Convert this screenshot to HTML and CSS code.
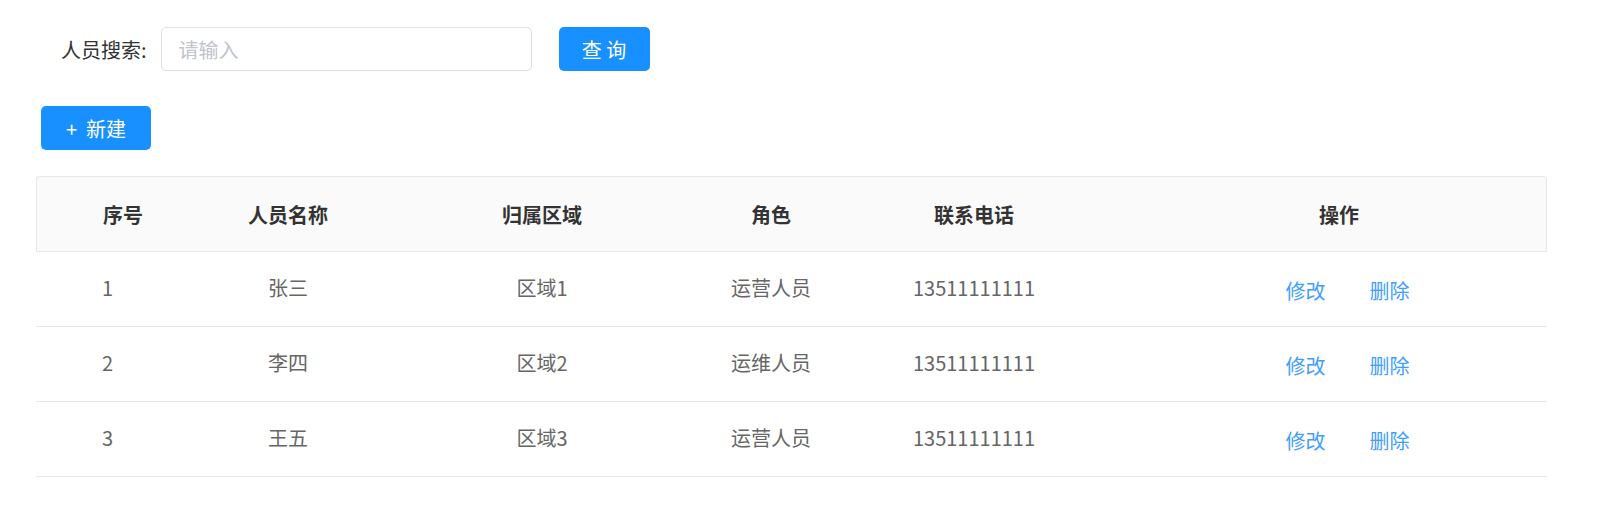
FILE: index.html
```html
<!DOCTYPE html>
<html lang="zh-CN">
<head>
    <meta charset="UTF-8" />
    <title>人员管理</title>
    <link rel="stylesheet" href="styles.css">
</head>
<body>
    <div class="search-bar">
        <span class="search-label">人员搜索:</span>
        <input type="text" class="search-input" placeholder="请输入" />
        <button class="btn btn-query">查 询</button>
    </div>

    <div class="toolbar">
        <button class="btn btn-new">+&nbsp; 新建</button>
    </div>

    <table class="user-table">
        <colgroup>
            <col class="w-index">
            <col class="w-name">
            <col class="w-area">
            <col class="w-role">
            <col class="w-phone">
            <col class="w-ops">
        </colgroup>
        <thead>
            <tr>
                <th class="col-index">序号</th>
                <th>人员名称</th>
                <th>归属区域</th>
                <th>角色</th>
                <th>联系电话</th>
                <th>操作</th>
            </tr>
        </thead>
        <tbody>
            <tr>
                <td class="col-index">1</td>
                <td>张三</td>
                <td>区域1</td>
                <td>运营人员</td>
                <td>13511111111</td>
                <td class="ops"><a href="#">修改</a><a href="#">删除</a></td>
            </tr>
            <tr>
                <td class="col-index">2</td>
                <td>李四</td>
                <td>区域2</td>
                <td>运维人员</td>
                <td>13511111111</td>
                <td class="ops"><a href="#">修改</a><a href="#">删除</a></td>
            </tr>
            <tr>
                <td class="col-index">3</td>
                <td>王五</td>
                <td>区域3</td>
                <td>运营人员</td>
                <td>13511111111</td>
                <td class="ops"><a href="#">修改</a><a href="#">删除</a></td>
            </tr>
        </tbody>
    </table>
</body>
</html>
```

FILE: styles.css
```css
body {
  margin: 0;
  font-family: "Noto Sans CJK SC", "Noto Sans", sans-serif;
  font-size: 20px;
  color: #333;
  background: #fff;
}

/* search row */
.search-bar {
  display: flex;
  align-items: center;
  padding-top: 27px;
  margin-left: 61px;
}
.search-label {
  color: #333;
  margin-right: 14px;
}
.search-input {
  width: 371px;
  height: 44px;
  box-sizing: border-box;
  border: 1px solid #dcdfe6;
  border-radius: 5px;
  padding: 0 17px;
  font-family: inherit;
  font-size: 20px;
  outline: none;
}
.search-input::placeholder {
  color: #c0c4cc;
}

.btn {
  height: 44px;
  border: none;
  border-radius: 5px;
  background-color: #1890ff;
  color: #fff;
  font-family: inherit;
  font-size: 20px;
  cursor: pointer;
  padding: 0;
}
.btn-query {
  width: 91px;
  margin-left: 27px;
}
.toolbar {
  margin-top: 35px;
  margin-left: 41px;
}
.btn-new {
  width: 110px;
}

/* table */
.user-table {
  margin-top: 26px;
  margin-left: 36px;
  width: 1511px;
  table-layout: fixed;
  border-collapse: separate;
  border-spacing: 0;
}
.w-index { width: 182px; }
.w-name { width: 140px; }
.w-area { width: 368px; }
.w-role { width: 90px; }
.w-phone { width: 316px; }
.w-ops { width: 415px; }

.user-table th,
.user-table td {
  height: 74px;
  padding: 0;
  text-align: center;
  white-space: nowrap;
}
.user-table th {
  background: #fafafa;
  border-top: 1px solid #e8e8e8;
  border-bottom: 1px solid #e8e8e8;
  font-weight: bold;
  color: #333;
}
.user-table th:first-child {
  border-left: 1px solid #e8e8e8;
  border-top-left-radius: 4px;
}
.user-table th:last-child {
  border-right: 1px solid #e8e8e8;
  border-top-right-radius: 4px;
}
.user-table td {
  height: 70px;
  padding-bottom: 4px;
  color: #666;
  border-bottom: 1px solid #e8e8e8;
}
.user-table .col-index {
  text-align: left;
  padding-left: 66px;
}
.user-table td.ops {
  height: 71px;
  padding-top: 3px;
  padding-bottom: 0;
  padding-left: 16px;
}
.ops a {
  color: #409eff;
  text-decoration: none;
  margin: 0 22px;
}
```
